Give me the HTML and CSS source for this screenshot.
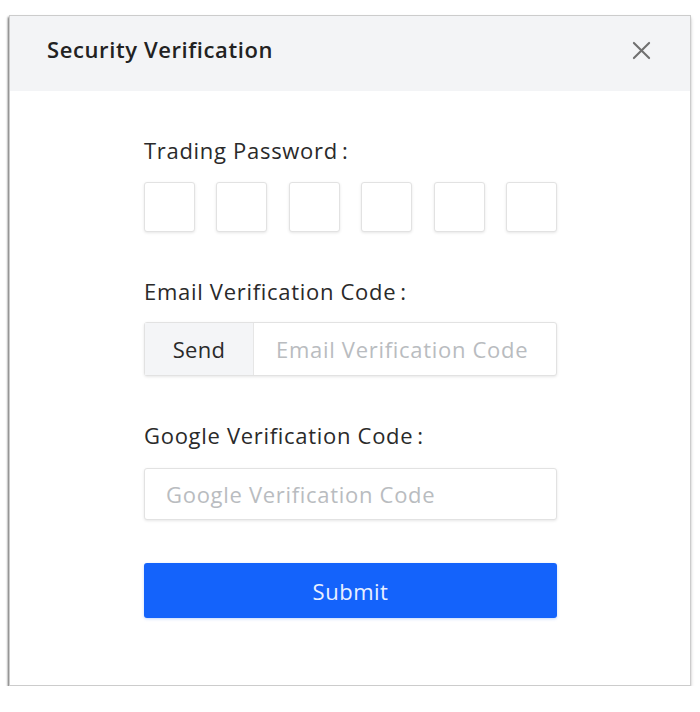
FILE: index.html
```html
<!DOCTYPE html>
<html lang="en">
<head>
<meta charset="utf-8">
<title>Security Verification</title>
<link rel="stylesheet" href="styles.css">
</head>
<body>
<div class="modal">
  <div class="modal-header">
    <span class="modal-title">Security Verification</span>
    <button class="close-btn" aria-label="Close">
      <svg viewBox="0 0 20 20" width="19" height="19"><path d="M2 2 L18 18 M18 2 L2 18" stroke="#707070" stroke-width="2.2" stroke-linecap="round" fill="none"/></svg>
    </button>
  </div>
  <div class="modal-body">
    <div class="field field-pin">
      <div class="label">Trading Password<span class="colon">:</span></div>
      <div class="pin-row">
        <div class="pin"></div><div class="pin"></div><div class="pin"></div>
        <div class="pin"></div><div class="pin"></div><div class="pin"></div>
      </div>
    </div>
    <div class="field field-email">
      <div class="label">Email Verification Code<span class="colon">:</span></div>
      <div class="input-group">
        <div class="send">Send</div>
        <div class="input-text placeholder">Email Verification Code</div>
      </div>
    </div>
    <div class="field field-google">
      <div class="label">Google Verification Code<span class="colon">:</span></div>
      <div class="input single">
        <div class="input-text placeholder">Google Verification Code</div>
      </div>
    </div>
    <button class="submit">Submit</button>
  </div>
</div>
</body>
</html>
```
FILE: styles.css
```css
* { box-sizing: border-box; }
html, body { margin: 0; padding: 0; background: #ffffff; }
body {
  font-family: "Open Sans", "Noto Sans", sans-serif;
  color: #2b2b2b;
  padding: 15px 9px 0 9px;
}
.modal {
  width: 682px;
  height: 671px;
  background: #ffffff;
  border: 1px solid #cccccc;
  box-shadow: -1px 2px 2px rgba(0,0,0,0.55), 0 3px 4px rgba(0,0,0,0.15);
  display: flex;
  flex-direction: column;
}
.modal-header {
  height: 75px;
  background: #f3f4f6;
  display: flex;
  align-items: flex-start;
  justify-content: space-between;
  padding: 18px 39px 0 37px;
}
.modal-title {
  font-size: 22px;
  line-height: 30px;
  font-weight: 600;
  color: #222;
  letter-spacing: 0.6px;
}
.close-btn {
  border: 0;
  background: transparent;
  padding: 0;
  margin-top: 7px;
  width: 19px;
  height: 19px;
  display: flex;
}
.modal-body {
  padding: 47px 0 0 134px;
  width: 547px;
  display: flex;
  flex-direction: column;
}
.field { display: flex; flex-direction: column; }
.field-pin { margin-bottom: 47px; }
.field-email { margin-bottom: 47px; }
.field-google { margin-bottom: 43px; }
.label {
  font-size: 22px;
  line-height: 24px;
  letter-spacing: 0.7px;
  color: #2a2a2a;
}
.field-pin .label { margin-bottom: 20px; }
.field-email .label { margin-bottom: 19px; }
.field-google .label { margin-bottom: 21px; }
.colon { margin-left: 4px; }
.pin-row { display: flex; justify-content: space-between; width: 413px; }
.pin {
  width: 51px;
  height: 50px;
  border: 1px solid #e2e2e2;
  border-radius: 3px;
  box-shadow: 0 1px 3px rgba(0,0,0,0.10);
  background: #fff;
}
.input-group, .input {
  width: 413px;
  border: 1px solid #e2e2e2;
  border-radius: 3px;
  box-shadow: 0 1px 3px rgba(0,0,0,0.10);
  display: flex;
  align-items: stretch;
  background: #fff;
}
.input-group { height: 54px; }
.input { height: 52px; }
.send {
  width: 109px;
  background: #f4f5f7;
  border-right: 1px solid #e6e6e6;
  display: flex;
  align-items: center;
  justify-content: center;
  font-size: 22px;
  letter-spacing: 0.3px;
  color: #2a2a2a;
}
.input-text {
  display: flex;
  align-items: center;
  font-size: 22px;
  letter-spacing: 0.7px;
}
.input-group .input-text { padding-left: 22px; }
.input.single .input-text { padding-left: 21px; }
.placeholder { color: #b9bcc0; }
.submit {
  width: 413px;
  height: 55px;
  border: 0;
  border-radius: 3px;
  background: #1463fb;
  color: #e9f0ff;
  font-family: inherit;
  font-size: 22px;
  letter-spacing: 0.5px;
  box-shadow: 0 1px 3px rgba(20,99,251,0.25);
}
```
